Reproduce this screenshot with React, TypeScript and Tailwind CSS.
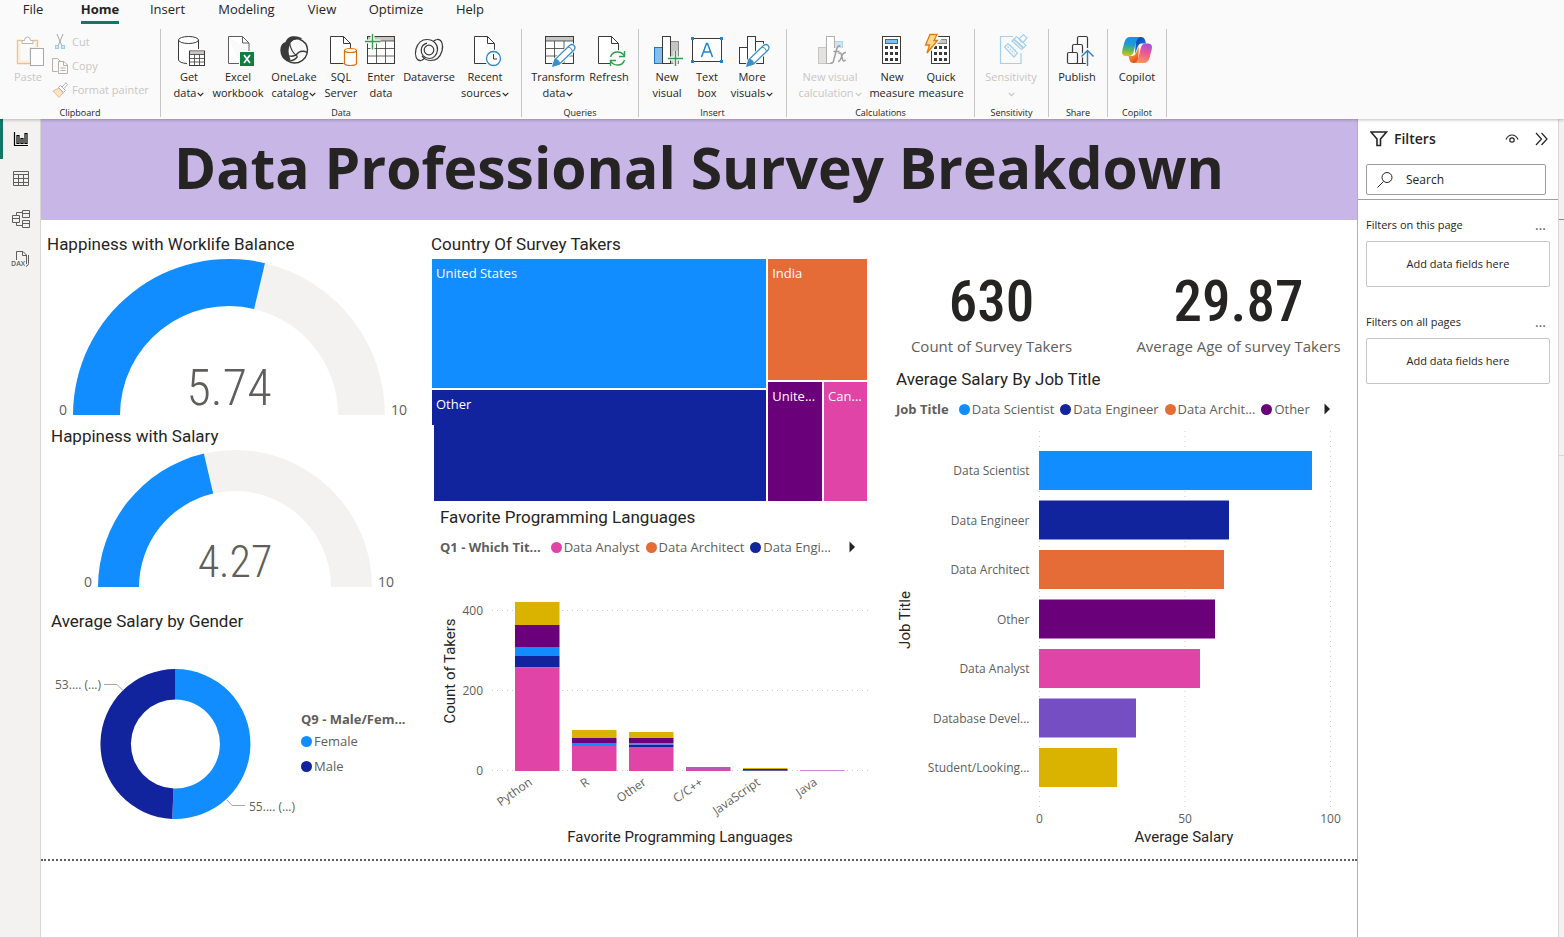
import type { ReactNode } from "react";

const INK = "#3b3a39";
const BLUE = "#118dff";
const NAVY = "#12239e";
const ORANGE = "#e66c37";
const PURPLE = "#6b007b";
const PINK = "#e044a7";
const VIOLET = "#744ec2";
const GOLD = "#d9b300";

/* ---------- icons ---------- */

function Icon({ children }: { children: ReactNode }) {
  return (
    <svg width="32" height="32" viewBox="0 0 32 32" fill="none" stroke={INK} className="shrink-0 overflow-visible" aria-hidden="true">
      {children}
    </svg>
  );
}

function Page() {
  return (
    <>
      <path d="M5.500 2.500H18.500L25.500 9.500V29.500H5.500Z" fill="#fff" />
      <path d="M18.500 2.500V9.500H25.500" />
    </>
  );
}

function Pencil() {
  return (
    <g>
      <path d="M11 32L13 25.500L27.500 11.500Q30 9.500 32 11.500Q34 13.500 32 16L17.500 30Z" fill="#fff" stroke="#fafafa" strokeWidth="3" />
      <path d="M11 32L13 25.500L27.500 11.500Q30 9.500 32 11.500Q34 13.500 32 16L17.500 30Z" fill="#fff" stroke="#3a8fc8" strokeWidth="1.300" />
      <path d="M11 32L13 25.500Q17.500 25.500 17.500 30Z" fill="#3a8fc8" stroke="#3a8fc8" />
      <path d="M26 13Q30 13.500 30.500 17.500" stroke="#3a8fc8" />
    </g>
  );
}

const icons = {
  paste: (
    <Icon>
      <path d="M7.500 9V27.500H18V14H24V9" stroke="#fbeeda" strokeWidth="2" />
      <path d="M10 6.500H5.500V29.500H18M21 6.500H25.500V13" stroke="#f2c089" strokeWidth="1.400" />
      <path d="M10 9.500V6.500H12.500Q12.500 3 15.500 3Q18.500 3 18.500 6.500H21V9.500Z" fill="#fff" stroke="#b8b6b4" />
      <rect x="18.500" y="14.500" width="13" height="17" fill="#fdfdfd" stroke="#a9a7a5" />
    </Icon>
  ),
  getData: (
    <Icon>
      <path d="M5.500 6V26Q6 29.500 14.500 29.500V16.500H25.500V6" fill="#fff" stroke="none" />
      <ellipse cx="15.500" cy="6" rx="10" ry="3.500" fill="#fff" />
      <path d="M5.500 6V26Q6.500 29 14 29.500M25.500 6V15" />
      <rect x="16.500" y="17" width="15" height="14.500" fill="#fff" />
      <rect x="17" y="17.500" width="14" height="3" fill="#c8c6c4" stroke="none" />
      <path d="M16.500 20.500H31.500M16.500 24.500H31.500M16.500 28H31.500M21.500 20.500V31.500M26.500 20.500V31.500" strokeWidth=".8" />
    </Icon>
  ),
  excel: (
    <Icon>
      <path d="M6.500 2.500H20.500L27 9V17M17 29.500H6.500V2.500M20.500 2.500V9H27" fill="#fff" stroke="#605e5c" />
      <rect x="18" y="18" width="14" height="14" fill="#107c41" stroke="none" />
      <path d="M22 21L28 29M28 21L22 29" stroke="#fff" strokeWidth="1.700" />
    </Icon>
  ),
  oneLake: (
    <Icon>
      <path d="M7.500 8Q9 3.500 14 2.300Q21 1.500 24.500 5Q16 3.500 12.500 9Q8.500 17 12.500 25.500L9 27.500Q2.500 24 2.300 16Q2.500 9.500 7.500 8Z" fill={INK} stroke="none" />
      <path d="M11 8Q15 4 21 5Q29 8 29.500 15.500Q29.500 25 20.500 28.500Q13 30 9.500 26.500" strokeWidth="1.400" />
      <path d="M11.500 9Q13 18 19.500 22.500M9.500 21.500Q16 24 20.500 18.500Q24.500 16 29.500 18.500M9.500 26.500Q15.500 28 19.500 22.500" strokeWidth="1.300" />
    </Icon>
  ),
  sql: (
    <Icon>
      <Page />
      <path d="M18.500 15H33V32H18.500Z" fill="#fafafa" stroke="none" />
      <path d="M19.500 17V29.500Q20 31.500 25.500 31.500Q31 31.500 31.500 29.500V17" fill="#fff" stroke="#d8700f" strokeWidth="1.200" />
      <ellipse cx="25.500" cy="16.500" rx="6" ry="2" fill="#fff" stroke="#d8700f" strokeWidth="1.200" />
    </Icon>
  ),
  enter: (
    <Icon>
      <rect x="2.500" y="2.500" width="27" height="27" fill="#fff" />
      <rect x="3" y="3" width="26" height="4" fill="#c8c6c4" stroke="none" />
      <path d="M2.500 7H29.500M2.500 14.500H29.500M2.500 22H29.500M11.500 7V29.500M20.500 7V29.500" strokeWidth=".8" />
      <path d="M7.500 0V15.500M0 7.500H15.500" stroke="#fafafa" strokeWidth="4" />
      <path d="M7.500 0V15.500M0 7.500H15.500" stroke="#2f9e4f" strokeWidth="1.400" />
    </Icon>
  ),
  dataverse: (
    <Icon>
      <g strokeWidth="1.200">
        <circle cx="16" cy="16" r="4.800" />
        <path d="M8.500 26.500C3 27.500 1.500 21 3 15C5 8.500 9.500 5.500 14 5.500C20.500 5.500 25 10.500 24.500 16C24 21.500 20 24.500 16.500 24.500C11 24.500 8 20.500 8.200 16C8.500 12.500 11 10 14 9.200" />
        <path d="M23.500 5.500C29 4.500 30.500 11 29 17C27 23.500 22.500 26.500 18 26.500C14 26.500 11 25 9 22" />
        <path d="M23.500 5.500L20 7.500M8.500 26.500L12 24" />
      </g>
    </Icon>
  ),
  recent: (
    <Icon>
      <Page />
      <circle cx="24.500" cy="24.500" r="9" fill="#fafafa" stroke="none" />
      <circle cx="24.500" cy="24.500" r="7" fill="#fff" stroke="#2b88c9" strokeWidth="1.300" />
      <path d="M24.500 20V25H28" />
    </Icon>
  ),
  transform: (
    <Icon>
      <rect x="3.500" y="2.500" width="28" height="27" fill="#fff" />
      <rect x="4" y="3" width="27" height="4" fill="#c8c6c4" stroke="none" />
      <path d="M3.500 7H31.500M3.500 14.500H31.500M3.500 22H31.500M12.500 7V29.500M22 7V29.500" strokeWidth=".8" />
      <Pencil />
    </Icon>
  ),
  refresh: (
    <Icon>
      <Page />
      <circle cx="24.500" cy="24.500" r="8.500" fill="#fafafa" stroke="none" />
      <path d="M17.500 23Q19 18 24.500 18Q29 18 31.500 22M31.500 17V22.500H26M31.500 26Q30 31 24.500 31Q20 31 17.500 27M17.500 32V26.500H23" stroke="#2f9e4f" strokeWidth="1.400" />
    </Icon>
  ),
  newVisual: (
    <Icon>
      <rect x="3.500" y="13.500" width="8" height="16" fill="#83beec" stroke="#1777bf" />
      <rect x="19.500" y="7.500" width="8" height="22" fill="#c8c6c4" stroke="#8a8886" />
      <rect x="11.500" y="2.500" width="8" height="27" fill="#fff" />
      <path d="M24.500 17V32M17 24.500H32" stroke="#fafafa" strokeWidth="4" />
      <path d="M24.500 17V32M17 24.500H32" stroke="#2f9e4f" strokeWidth="1.400" />
    </Icon>
  ),
  textBox: (
    <Icon>
      <rect x="1.500" y="4.500" width="29" height="23" fill="#fff" />
      <path d="M0 3H3V6H0ZM29 3H32V6H29ZM0 26H3V29H0ZM29 26H32V29H29Z" fill="#1c86d1" stroke="none" />
      <path d="M10.500 23L15.500 9.500H16.500L21.500 23M12.500 18H19.500" stroke="#1c86d1" strokeWidth="1.500" />
    </Icon>
  ),
  moreVisuals: (
    <Icon>
      <rect x="3.500" y="13.500" width="8" height="16" fill="#fff" />
      <rect x="19.500" y="7.500" width="8" height="22" fill="#fff" />
      <rect x="11.500" y="2.500" width="8" height="27" fill="#fff" />
      <Pencil />
    </Icon>
  ),
  visualCalc: (
    <Icon>
      <rect x="4.500" y="13.500" width="8" height="16" fill="#e4e2e1" stroke="#c8c6c4" />
      <rect x="20.500" y="7.500" width="8" height="12" fill="#cfe4f5" stroke="#b4d3ea" />
      <rect x="12.500" y="2.500" width="8" height="27" fill="#fff" stroke="#b3b0ad" />
      <rect x="18" y="14" width="15" height="18" fill="#fafafa" stroke="none" />
      <path d="M26.500 12.500Q24 10.500 22.700 15L19.500 27Q18.700 30 16.500 28.500M19.500 17.500H25.500M24.500 19.500Q27 18 27.500 21L28.500 25Q29 28.500 31.500 26M32 18.500Q29 18.500 27.500 23Q26 27.500 24 27.500" stroke="#a19f9d" strokeWidth="1.500" />
    </Icon>
  ),
  newMeasure: (
    <Icon>
      <rect x="6.500" y="2.500" width="18" height="27" fill="#fff" />
      <rect x="9.500" y="5.500" width="12" height="4" fill="#83beec" stroke="#1777bf" />
      <path d="M9 13.500H22M9 19.500H22M9 25.500H22" strokeWidth="3" strokeDasharray="3 2" />
    </Icon>
  ),
  quickMeasure: (
    <Icon>
      <rect x="6.500" y="2.500" width="18" height="27" fill="#fff" />
      <rect x="12.500" y="5.500" width="9" height="4" fill="#c8c6c4" stroke="#8a8886" />
      <path d="M9 13.500H22M9 19.500H22M9 25.500H22" strokeWidth="3" strokeDasharray="3 2" />
      <path d="M5 .500H12L9 6.500H12.500L2 19L4.500 11H.500Z" fill="#fde08e" stroke="#fafafa" strokeWidth="4" />
      <path d="M5 .500H12L9 6.500H12.500L2 19L4.500 11H.500Z" fill="#fcd98a" stroke="#e07c12" strokeWidth="1.300" />
    </Icon>
  ),
  sensitivity: (
    <Icon>
      <g stroke="#a6d0ea" strokeWidth="1.200">
        <path d="M18 2.500H5.500V29.500H26V19" />
        <path d="M9.500 13L13 9.500L22.500 19L19 23Z" />
        <path d="M12.500 12.500L19.500 19.500M15 11L21 17" strokeDasharray="2 1" />
        <path d="M17 7L21.500 2.500L24 5L28.500 .500L32 4L28 8.500L31 11.500L26.500 15.500Z" fill="#fafafa" />
        <path d="M19 5.500L28.500 14M24 5L28 8.500" strokeWidth="1.800" />
      </g>
    </Icon>
  ),
  publish: (
    <Icon>
      <path d="M8 29.500Q6.500 29.500 6.500 28V20Q6.500 18.500 8 18.500H15Q16.500 18.500 16.500 20V28Q16.500 29.500 15 29.500H8ZM11.500 18.500V12Q11.500 10.500 13 10.500H20Q21.500 10.500 21.500 12V29.500M16.500 10.500V4Q16.500 2.500 18 2.500H25Q26.500 2.500 26.500 4V14M15 29.500H25" strokeWidth="1.200" />
      <path d="M26.500 17V32M20.500 22.500L26.500 16.500L32.500 22.500" stroke="#fafafa" strokeWidth="3.500" />
      <path d="M26.500 17V32M20.500 22.500L26.500 16.500L32.500 22.500" stroke="#2b7cb8" strokeWidth="1.400" />
    </Icon>
  ),
  copilot: (
    <Icon>
      <defs>
        <linearGradient id="cpA" x1="10" y1="3" x2="8" y2="23" gradientUnits="userSpaceOnUse">
          <stop offset="0" stopColor="#1494e9" />
          <stop offset=".35" stopColor="#1a9bd8" />
          <stop offset=".65" stopColor="#5cb85c" />
          <stop offset="1" stopColor="#f2c314" />
        </linearGradient>
        <linearGradient id="cpB" x1="26" y1="9" x2="20" y2="29" gradientUnits="userSpaceOnUse">
          <stop offset="0" stopColor="#a64be0" />
          <stop offset=".5" stopColor="#ee5b90" />
          <stop offset="1" stopColor="#fb9657" />
        </linearGradient>
        <linearGradient id="cpC" x1="17" y1="3" x2="24" y2="10" gradientUnits="userSpaceOnUse">
          <stop offset="0" stopColor="#0b46a8" />
          <stop offset="1" stopColor="#1b6be8" />
        </linearGradient>
        <linearGradient id="cpD" x1="8" y1="21" x2="14" y2="29" gradientUnits="userSpaceOnUse">
          <stop offset="0" stopColor="#f2a02c" />
          <stop offset="1" stopColor="#e2452b" />
        </linearGradient>
      </defs>
      <g stroke="none">
        <path d="M15 3H20Q23 3 24 6L25 9.500H20Q18 9.500 17 12L14 20Z" fill="url(#cpC)" />
        <path d="M17 29H12.500Q9.500 29 8.500 26L7.500 22H11Q14 22 15 19L18 12Z" fill="url(#cpD)" />
        <path d="M9 3H19Q16.500 4 15.500 7L12.500 18Q11.500 22 8 22H5Q0 22 1.300 16L3.500 8Q5 3 9 3Z" fill="url(#cpA)" />
        <path d="M23 29H13Q16 28 17 25L20 13.500Q21 9.500 24.500 9.500H27Q32 9.500 30.700 15.500L28.500 24Q27 29 23 29Z" fill="url(#cpB)" />
      </g>
    </Icon>
  ),
};

function SmallIcon({ children }: { children: ReactNode }) {
  return (
    <svg width="16" height="16" viewBox="0 0 16 16" fill="none" stroke="#b3b0ad" className="shrink-0" aria-hidden="true">
      {children}
    </svg>
  );
}

function Chevron() {
  return (
    <svg width="7" height="5" viewBox="0 0 7 5" fill="none" stroke="currentColor" strokeWidth="1.100" className="ml-px inline-block align-middle" aria-hidden="true">
      <path d="M.7 .8L3.500 3.700L6.300 .8" />
    </svg>
  );
}

/* ---------- ribbon ---------- */

function RibbonButton({ icon, lines, width, chevron, disabled }: { icon: ReactNode; lines: string[]; width: string; chevron?: boolean; disabled?: boolean }) {
  return (
    <button type="button" disabled={disabled} className={`flex shrink-0 flex-col items-center gap-[3px] ${width} ${disabled ? "text-[#c8c6c4]" : "text-[#252423]"}`}>
      {icon}
      <span className="flex flex-col items-center text-[11px] leading-4 whitespace-nowrap">
        {lines.map((line, i) => (
          <span key={i}>
            {line}
            {chevron && i === lines.length - 1 && <Chevron />}
          </span>
        ))}
      </span>
    </button>
  );
}

function Group({ label, width, inset = "", children }: { label: string; width: string; inset?: string; children: ReactNode }) {
  return (
    <section aria-label={label} className={`flex h-[88px] shrink-0 flex-col justify-between border-r border-[#c8c6c4] pt-[5px] ${width}`}>
      <div className={`flex items-start ${inset}`}>{children}</div>
      <div className="text-center text-[9px] leading-[9px] text-[#252423]">{label}</div>
    </section>
  );
}

const tabs = [
  { name: "File", width: "w-[60px]" },
  { name: "Home", width: "w-[74px]" },
  { name: "Insert", width: "w-[61px]" },
  { name: "Modeling", width: "w-[97px]" },
  { name: "View", width: "w-[54px]" },
  { name: "Optimize", width: "w-[94px]" },
  { name: "Help", width: "w-[54px]" },
];

function Ribbon() {
  return (
    <header className="relative z-10 h-[119px] overflow-hidden bg-[#fafafa] shadow-[0_1px_3px_rgba(0,0,0,0.25)]">
      <nav className="flex h-6 pl-[3px]">
        {tabs.map((t) => (
          <button key={t.name} type="button" className={`flex justify-center ${t.width}`}>
            <span className={`h-6 text-[13px] leading-[19px] text-[#252423] ${t.name === "Home" ? "border-b-3 border-[#117865] font-bold" : ""}`}>{t.name}</span>
          </button>
        ))}
      </nav>
      <div className="mt-[5px] flex">
        <Group label="Clipboard" width="w-[161px]">
          <RibbonButton icon={icons.paste} lines={["Paste"]} width="w-[56px]" disabled />
          <div className="-ml-1 flex flex-col gap-2 text-[11px] leading-4 text-[#c8c6c4]">
            <button type="button" disabled className="flex items-center gap-1 whitespace-nowrap">
              <SmallIcon>
                <path d="M5 0L9.500 11M11 0L6.500 11" stroke="#a9a7a5" />
                <rect x="3.500" y="11.500" width="3" height="3" fill="#cfe6f5" stroke="#9ccbea" />
                <rect x="9.500" y="11.500" width="3" height="3" fill="#cfe6f5" stroke="#9ccbea" />
              </SmallIcon>
              Cut
            </button>
            <button type="button" disabled className="flex items-center gap-1 whitespace-nowrap">
              <SmallIcon>
                <path d="M5.500 13.500H.500V.500H5.500L8 3" />
                <path d="M6.500 3.500H12L15.500 7V15.500H6.500ZM11.500 3.500V7.500H15.500M8.500 10H13.500M8.500 12.500H13.500" />
              </SmallIcon>
              Copy
            </button>
            <button type="button" disabled className="flex items-center gap-1 whitespace-nowrap">
              <SmallIcon>
                <path d="M1 9L7 6L11 11L7 15.500Z" fill="#fbe3c8" stroke="#f0b98a" />
                <path d="M6.500 5.500L8.500 3.500L13.500 8.500L11.500 10.500ZM10 5L14 .800L15.500 2.500L12 6.500" fill="#fff" />
              </SmallIcon>
              Format painter
            </button>
          </div>
        </Group>
        <Group label="Data" width="w-[361px]" inset="pl-1.5">
          <RibbonButton icon={icons.getData} lines={["Get", "data"]} width="w-[44px]" chevron />
          <RibbonButton icon={icons.excel} lines={["Excel", "workbook"]} width="w-[54px]" />
          <RibbonButton icon={icons.oneLake} lines={["OneLake", "catalog"]} width="w-[58px]" chevron />
          <RibbonButton icon={icons.sql} lines={["SQL", "Server"]} width="w-[36px]" />
          <RibbonButton icon={icons.enter} lines={["Enter", "data"]} width="w-[44px]" />
          <RibbonButton icon={icons.dataverse} lines={["Dataverse"]} width="w-[52px]" />
          <RibbonButton icon={icons.recent} lines={["Recent", "sources"]} width="w-[60px]" chevron />
        </Group>
        <Group label="Queries" width="w-[117px]" inset="pl-[9px]">
          <RibbonButton icon={icons.transform} lines={["Transform", "data"]} width="w-[54px]" chevron />
          <RibbonButton icon={icons.refresh} lines={["Refresh"]} width="w-[48px]" />
        </Group>
        <Group label="Insert" width="w-[148px]" inset="pl-2">
          <RibbonButton icon={icons.newVisual} lines={["New", "visual"]} width="w-[40px]" />
          <RibbonButton icon={icons.textBox} lines={["Text", "box"]} width="w-[40px]" />
          <RibbonButton icon={icons.moreVisuals} lines={["More", "visuals"]} width="w-[50px]" chevron />
        </Group>
        <Group label="Calculations" width="w-[188px]" inset="pl-1.5">
          <RibbonButton icon={icons.visualCalc} lines={["New visual", "calculation"]} width="w-[74px]" chevron disabled />
          <RibbonButton icon={icons.newMeasure} lines={["New", "measure"]} width="w-[50px]" />
          <RibbonButton icon={icons.quickMeasure} lines={["Quick", "measure"]} width="w-[48px]" />
        </Group>
        <Group label="Sensitivity" width="w-[74px]">
          <RibbonButton icon={icons.sensitivity} lines={["Sensitivity", ""]} width="w-[72px]" chevron disabled />
        </Group>
        <Group label="Share" width="w-[59px]">
          <RibbonButton icon={icons.publish} lines={["Publish"]} width="w-[56px]" />
        </Group>
        <Group label="Copilot" width="w-[59px]">
          <RibbonButton icon={icons.copilot} lines={["Copilot"]} width="w-[58px]" />
        </Group>
      </div>
    </header>
  );
}

/* ---------- view rail ---------- */

function ViewRail() {
  const item = "flex h-10 w-full items-center justify-center border-l-3";
  return (
    <nav aria-label="Views" className="flex w-[41px] shrink-0 flex-col border-r border-[#d8d6d4] bg-[#f3f2f1]">
      <button type="button" aria-label="Report view" className={`${item} border-[#117865] pr-[2px]`}>
        <svg width="16" height="16" viewBox="0 0 16 16" fill="none" stroke="#000" strokeWidth="1.200">
          <path d="M1.500 1V14.500H15" />
          <path d="M4 4.500H6V12.500H4ZM8 7.500H10V12.500H8ZM12 2.500H14V12.500H12Z" />
        </svg>
      </button>
      <button type="button" aria-label="Table view" className={`${item} border-transparent pr-[2px]`}>
        <svg width="18" height="18" viewBox="0 0 18 18" fill="none" stroke="#605e5c">
          <path d="M1.500 1.500H16.500V15.500H1.500ZM1.500 4.500H16.500M1.500 8.500H16.500M1.500 12.500H16.500M6.500 4.500V15.500M11.500 4.500V15.500" />
        </svg>
      </button>
      <button type="button" aria-label="Model view" className={`${item} border-transparent pr-[2px]`}>
        <svg width="20" height="20" viewBox="0 0 20 20" fill="none" stroke="#605e5c">
          <path d="M1.500 6.500H8.500V13.500H1.500ZM1.500 9.500H8.500M11.500 1.500H18.500V8.500H11.500ZM11.500 4.500H18.500M11.500 11.500H18.500V18.500H11.500ZM11.500 14.500H18.500M5.500 6.500V3.500H11.500M5.500 13.500V16.500H11.500" />
        </svg>
      </button>
      <button type="button" aria-label="DAX query view" className={`${item} border-transparent pt-[2px] pr-[2px]`}>
        <svg width="20" height="20" viewBox="0 0 20 20" fill="none" stroke="#605e5c">
          <path d="M5.500 10V1.500H12L15.500 5V14M11.500 1.500V5.500H15.500M17.500 5V13.500Q17.500 15.500 15 16.500" />
          <text x="0" y="16" fontSize="7" fill="#605e5c" stroke="none" className="font-semibold">DAX</text>
        </svg>
      </button>
    </nav>
  );
}

/* ---------- report visuals ---------- */

function VisualTitle({ children }: { children: ReactNode }) {
  return <h2 className="font-['Roboto',sans-serif] text-[17px] leading-6 font-normal whitespace-nowrap text-[#252423]">{children}</h2>;
}

function ringPath(cx: number, cy: number, outer: number, inner: number, from: number, to: number) {
  const pt = (r: number, a: number) => `${(cx + r * Math.cos(a)).toFixed(2)} ${(cy + r * Math.sin(a)).toFixed(2)}`;
  const large = to - from > Math.PI ? 1 : 0;
  return `M${pt(outer, from)}A${outer} ${outer} 0 ${large} 1 ${pt(outer, to)}L${pt(inner, to)}A${inner} ${inner} 0 ${large} 0 ${pt(inner, from)}Z`;
}

function Gauge({ cx, cy, outer, inner, value, height, size }: { cx: number; cy: number; outer: number; inner: number; value: number; height: number; size: number }) {
  const mid = Math.PI * (1 + value / 10);
  return (
    <svg viewBox={`0 0 390 ${height}`} className="block h-auto w-full" role="img" aria-label={`${value} of 10`}>
      <path d={ringPath(cx, cy, outer, inner, mid, Math.PI * 2)} fill="#f3f2f1" />
      <path d={ringPath(cx, cy, outer, inner, Math.PI, mid)} fill={BLUE} />
      <text x={cx} y={cy - 10} fontSize={size} textAnchor="middle" fill="#605e5c" className="font-['Roboto_Condensed','Roboto',sans-serif] font-light">{value}</text>
      <text x={cx - outer - 6} y={cy} fontSize="14" textAnchor="end" fill="#605e5c">0</text>
      <text x={cx + outer + 6} y={cy} fontSize="14" fill="#605e5c">10</text>
    </svg>
  );
}

function Dot({ color }: { color: string }) {
  return <span className="size-[11px] shrink-0 rounded-full" style={{ backgroundColor: color }} />;
}

function Legend({ title, items }: { title: string; items: [string, string][] }) {
  return (
    <div className="flex h-5 items-center gap-2.5 pr-[12px] text-[13px] leading-5 whitespace-nowrap text-[#605e5c]">
      <span className="font-bold">{title}</span>
      <ul className="flex flex-1 items-center gap-1.5">
        {items.map(([name, color]) => (
          <li key={name} className="flex items-center gap-0.5">
            <Dot color={color} />
            {name}
          </li>
        ))}
      </ul>
      <button type="button" aria-label="Next legend items">
        <svg width="7" height="12" viewBox="0 0 7 12"><path d="M.500 .500L6 6L.500 11.500Z" fill="#252423" /></svg>
      </button>
    </div>
  );
}

function Donut() {
  const top = -Math.PI / 2;
  const split = top + 2 * Math.PI * 0.507;
  return (
    <svg width="260" height="200" viewBox="0 0 260 200" className="shrink-0" role="img" aria-label="Average salary by gender">
      <path d={ringPath(134.5, 100, 75, 44.5, top, split)} fill={BLUE} />
      <path d={ringPath(134.5, 100, 75, 44.5, split, top + 2 * Math.PI)} fill={NAVY} />
      <path d="M63 40.500H76L82 46.500M186 156L191 161.500H204" fill="none" stroke="#a6a6a6" />
      <text x="14" y="45" fontSize="12" fill="#605e5c">53.... (...)</text>
      <text x="208" y="167" fontSize="12" fill="#605e5c">55.... (...)</text>
    </svg>
  );
}

function Treemap() {
  const cell = "px-1 pt-1 text-[13px] leading-5 whitespace-nowrap text-white overflow-hidden";
  return (
    <div className="grid h-[242px] grid-cols-[335fr_99fr] gap-[2px] px-px">
      <div className="grid min-w-0 grid-rows-[129fr_111fr] gap-[2px]">
        <div className={`${cell} bg-[#118dff]`}>United States</div>
        <div className={`${cell} relative bg-[#12239e]`}>
          Other
          <span className="absolute bottom-0 left-0 h-[76px] w-0.5 bg-white" />
        </div>
      </div>
      <div className="grid min-w-0 grid-rows-[121fr_119fr] gap-[2px]">
        <div className={`${cell} bg-[#e66c37]`}>India</div>
        <div className="grid min-w-0 grid-cols-[54fr_43fr] gap-[2px]">
          <div className={`${cell} bg-[#6b007b]`}>Unite...</div>
          <div className={`${cell} bg-[#e044a7]`}>Can...</div>
        </div>
      </div>
    </div>
  );
}

const languages: { name: string; parts: [string, number, number][] }[] = [
  { name: "Python", parts: [[GOLD, 41, 23], [PURPLE, 64, 22], [BLUE, 86, 9], [NAVY, 95, 11], [ORANGE, 106, 1], [PINK, 107, 103]] },
  { name: "R", parts: [[GOLD, 169, 8], [PURPLE, 177, 5], [BLUE, 182, 3], [PINK, 185, 25]] },
  { name: "Other", parts: [[GOLD, 171, 6], [PURPLE, 177, 5], ["#6a7fe0", 182, 2], [NAVY, 184, 2], [PINK, 186, 24]] },
  { name: "C/C++", parts: [["#b05bb5", 206, 2], [PINK, 208, 2]] },
  { name: "JavaScript", parts: [[GOLD, 207, 1], [PURPLE, 208, 1], ["#5560b8", 209, 1]] },
  { name: "Java", parts: [["#c48fce", 209, 1]] },
];

function LanguagesChart() {
  return (
    <svg viewBox="0 0 437 290" className="block h-auto w-full" role="img" aria-label="Favorite programming languages by count of takers">
      {[400, 200, 0].map((v, i) => (
        <g key={v}>
          <path d={`M61 ${49.5 + 80 * i}H437`} stroke="#cfcdcb" strokeDasharray="1 4" />
          <text x="52" y={54 + 80 * i} fontSize="12" textAnchor="end" fill="#605e5c">{v}</text>
        </g>
      ))}
      {languages.map((l, i) => (
        <g key={l.name}>
          {l.parts.map(([color, y, h]) => (
            <rect key={color} x={84 + 57 * i} y={y} width="44.500" height={h} fill={color} />
          ))}
          <text transform={`translate(${102 + 57 * i} 223) rotate(-35)`} fontSize="12" textAnchor="end" fill="#605e5c">{l.name}</text>
        </g>
      ))}
      <g className="font-['Roboto',sans-serif]" fill="#252423" fontSize="15" textAnchor="middle">
        <text transform="translate(24 110) rotate(-90)">Count of Takers</text>
        <text x="249" y="281">Favorite Programming Languages</text>
      </g>
    </svg>
  );
}

const salaries: [string, string, number][] = [
  ["Data Scientist", BLUE, 273],
  ["Data Engineer", NAVY, 190],
  ["Data Architect", ORANGE, 185],
  ["Other", PURPLE, 176],
  ["Data Analyst", PINK, 161],
  ["Database Devel...", VIOLET, 97],
  ["Student/Looking...", GOLD, 78],
];

function SalaryChart() {
  return (
    <svg viewBox="0 0 472 428" className="block h-auto w-full" role="img" aria-label="Average salary by job title">
      {[0, 50, 100].map((v, i) => (
        <g key={v}>
          <path d={`M${154.5 + 145.5 * i} 12V389`} stroke="#cfcdcb" strokeDasharray="1 4" />
          <text x={154.5 + 145.5 * i} y="404" fontSize="12" textAnchor="middle" fill="#605e5c">{v}</text>
        </g>
      ))}
      {salaries.map(([name, color, w], i) => (
        <g key={name}>
          <rect x="154" y={32 + 49.5 * i} width={w} height="39" fill={color} />
          <text x="144.500" y={56 + 49.5 * i} fontSize="12" textAnchor="end" fill="#605e5c">{name}</text>
        </g>
      ))}
      <g className="font-['Roboto',sans-serif]" fill="#252423" fontSize="15" textAnchor="middle">
        <text transform="translate(25 201) rotate(-90)">Job Title</text>
        <text x="299" y="423">Average Salary</text>
      </g>
    </svg>
  );
}

function Card({ value, label, width }: { value: string; label: string; width: string }) {
  return (
    <div className={`flex flex-col items-center whitespace-nowrap ${width}`}>
      <span className="font-['Roboto_Condensed','Roboto',sans-serif] text-[57px] leading-[64px] font-medium text-[#252423]">{value}</span>
      <span className="mt-0.5 text-[15px] leading-5 text-[#605e5c]">{label}</span>
    </div>
  );
}

function Report() {
  return (
    <main className="min-w-0 flex-1 bg-white">
      <div className="border-b-2 border-dotted border-[#605e5c]">
        <h1 className="flex h-[101px] items-center justify-center bg-[#c8b6e6] pb-1.5 text-[57px] leading-[72px] font-bold whitespace-nowrap text-[#252423]">
          Data Professional Survey Breakdown
        </h1>
        <div className="grid h-[639px] grid-cols-[390fr_454fr_472fr]">
          <div className="flex flex-col pt-3">
            <div className="pl-1.5"><VisualTitle>Happiness with Worklife Balance</VisualTitle></div>
            <Gauge cx={188} cy={159} outer={156} inner={109} value={5.74} height={168} size={50} />
            <div className="pl-[10px]"><VisualTitle>Happiness with Salary</VisualTitle></div>
            <Gauge cx={194} cy={139} outer={137} inner={96} value={4.27} height={161} size={44} />
            <div className="pl-[10px]"><VisualTitle>Average Salary by Gender</VisualTitle></div>
            <div className="flex pt-[11px]">
              <Donut />
              <div className="pt-[65px] text-[13px] leading-5 whitespace-nowrap text-[#605e5c]">
                <div className="font-bold">Q9 - Male/Fem...</div>
                <ul className="flex flex-col gap-[5px] pt-0.5">
                  <li className="flex items-center gap-0.5"><Dot color={BLUE} />Female</li>
                  <li className="flex items-center gap-0.5"><Dot color={NAVY} />Male</li>
                </ul>
              </div>
            </div>
          </div>
          <div className="flex flex-col pt-3 pr-[17px]">
            <VisualTitle>Country Of Survey Takers</VisualTitle>
            <div className="pt-[3px]"><Treemap /></div>
            <div className="flex flex-col gap-2 pt-1 pl-[9px]">
              <VisualTitle>Favorite Programming Languages</VisualTitle>
              <Legend title="Q1 - Which Tit..." items={[["Data Analyst", PINK], ["Data Architect", ORANGE], ["Data Engi...", NAVY]]} />
            </div>
            <div className="pt-1"><LanguagesChart /></div>
          </div>
          <div className="flex flex-col pt-[50px]">
            <div className="flex justify-between">
              <Card value="630" label="Count of Survey Takers" width="w-[213px]" />
              <Card value="29.87" label="Average Age of survey Takers" width="w-[237px]" />
            </div>
            <div className="flex flex-col gap-2 pt-[11px] pr-[14px] pl-[11px]">
              <VisualTitle>Average Salary By Job Title</VisualTitle>
              <Legend title="Job Title" items={[["Data Scientist", BLUE], ["Data Engineer", NAVY], ["Data Archit...", ORANGE], ["Other", PURPLE]]} />
            </div>
            <SalaryChart />
          </div>
        </div>
      </div>
    </main>
  );
}

/* ---------- filters ---------- */

function FilterSection({ title }: { title: string }) {
  return (
    <section className="flex flex-col gap-1.5 pr-2 pl-2">
      <div className="flex h-5 items-center justify-between pr-1 text-[11px] text-[#252423]">
        <h3>{title}</h3>
        <button type="button" aria-label={`${title} options`} className="text-[14px] leading-4 text-[#605e5c]">…</button>
      </div>
      <div className="flex h-[46px] items-center justify-center rounded-xs border border-[#c8c6c4] text-[11px] text-[#252423]">Add data fields here</div>
    </section>
  );
}

function Filters() {
  return (
    <aside className="flex w-[201px] shrink-0 flex-col border-l border-[#b3b0ad] bg-white">
      <div className="border-b border-[#a19f9d] pb-1">
        <div className="flex h-[45px] items-center pr-2.5 pb-[6px] pl-3">
          <svg width="18" height="16" viewBox="0 0 18 16" fill="none" stroke="#252423" strokeWidth="1.600" aria-hidden="true">
            <path d="M1 1H16.500L10.500 8V14.500H7V8Z" />
          </svg>
          <h2 className="flex-1 pl-1.5 text-[14px] leading-5 font-semibold text-[#252423]">Filters</h2>
          <button type="button" aria-label="Show filter pane" className="mr-4">
            <svg width="14" height="10" viewBox="0 0 14 10" fill="none" stroke="#252423" strokeWidth="1.200">
              <path d="M1 5.500Q3 1 7 1Q11 1 13 5.500" />
              <circle cx="7" cy="6" r="2.200" />
            </svg>
          </button>
          <button type="button" aria-label="Collapse filter pane">
            <svg width="13" height="14" viewBox="0 0 13 14" fill="none" stroke="#252423" strokeWidth="1.200">
              <path d="M1 1L6.500 7L1 13M6.500 1L12 7L6.500 13" />
            </svg>
          </button>
        </div>
        <label className="mr-3 ml-2 flex h-[31px] items-center gap-[13px] rounded-xs border border-[#a19f9d] px-2.5">
          <svg width="16" height="16" viewBox="0 0 16 16" fill="none" stroke="#252423" className="shrink-0" aria-hidden="true">
            <circle cx="10" cy="5.500" r="5" />
            <path d="M6.500 9.500L.500 15.500" />
          </svg>
          <input type="search" aria-label="Search filters" placeholder="Search" className="w-full min-w-0 bg-transparent text-[12px] text-[#252423] outline-none placeholder:text-[#252423]" />
        </label>
      </div>
      <div className="flex flex-col gap-[25px] pt-[15px]">
        <FilterSection title="Filters on this page" />
        <FilterSection title="Filters on all pages" />
      </div>
    </aside>
  );
}

export default function App() {
  return (
    <div className="flex min-h-screen flex-col overflow-hidden bg-white font-['Open_Sans',sans-serif]">
      <Ribbon />
      <div className="flex flex-1">
        <ViewRail />
        <Report />
        <Filters />
        <div className="w-1.5 shrink-0 border-l border-[#d8d6d4] bg-[#f3f2f1]">
          <div className="h-[101px] border-b border-[#8a8886]" />
          <div className="h-[236px] border-b border-[#d8d6d4]" />
        </div>
      </div>
    </div>
  );
}
